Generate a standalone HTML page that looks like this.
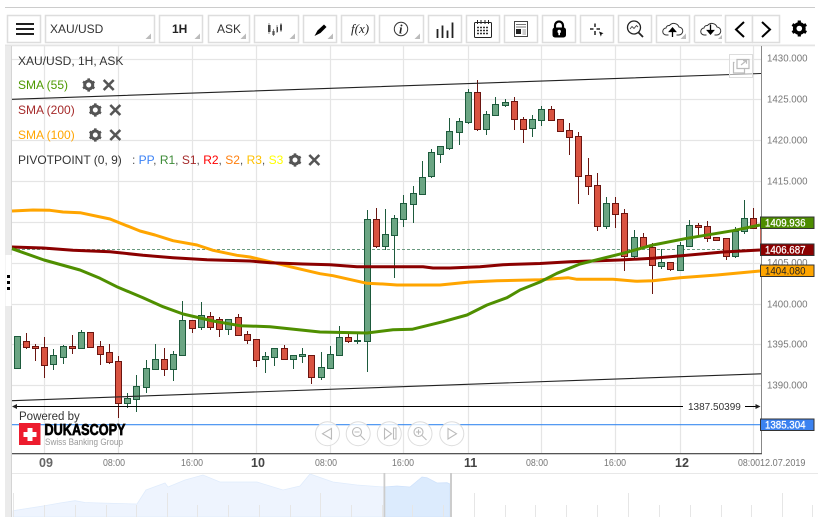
<!DOCTYPE html>
<html><head><meta charset="utf-8"><title>XAU/USD</title>
<style>
html,body{margin:0;padding:0;background:#fff;width:818px;height:517px;overflow:hidden}
svg{display:block;font-family:"Liberation Sans",Arial,sans-serif}
.b{fill:#fff;stroke:#ddd;stroke-width:1.5}
.t{fill:#bbb}
.ax{font-size:10.5px;fill:#777}
.tm{font-size:10px;fill:#777}
.lg{font-size:12px}
</style></head><body>
<svg width="818" height="517" viewBox="0 0 818 517" xmlns="http://www.w3.org/2000/svg">
<defs>
<g id="gear"><g stroke="#555" stroke-width="2.6"><path d="M0-6.6V6.6M-5.7-3.3L5.7 3.3M-5.7 3.3L5.7-3.3"/></g><circle r="4" fill="#fff" stroke="#555" stroke-width="3"/></g>
<path id="xx" d="M-5-5L5 5M-5 5L5-5" stroke="#555" stroke-width="2.6" fill="none"/>
<path id="cloud" d="M-4 6H-6A3.500 3.500 0 0 1-6.500-1A3 3 0 0 1-3-3.500A5.500 5.500 0 0 1 6.500-2A4 4 0 0 1 6 6H4" fill="none" stroke="#333" stroke-width="1"/>
</defs>

<!-- top & left frame -->
<rect x="5" y="7" width="810" height="1" fill="#ccc"/>
<rect x="5" y="44.500" width="810" height="1.800" fill="#e4e4e4"/>
<rect x="5" y="46" width="6" height="471" fill="#ebebeb"/>
<rect x="11" y="46" width="1" height="471" fill="#d4d4d4"/>
<rect x="5.500" y="255" width="6" height="51" fill="#fff"/>
<rect x="7" y="275" width="3" height="3" fill="#000"/><rect x="7" y="281" width="3" height="3" fill="#000"/><rect x="7" y="287" width="3" height="3" fill="#000"/>

<!-- toolbar buttons -->
<rect class="b" x="7.500" y="15.500" width="33" height="27"/>
<rect class="b" x="45.500" y="15.500" width="109" height="27"/>
<rect class="b" x="159.500" y="15.500" width="43" height="27"/>
<rect class="b" x="208.500" y="15.500" width="41" height="27"/>
<rect class="b" x="254.500" y="15.500" width="44" height="27"/>
<rect class="b" x="303.500" y="15.500" width="33" height="27"/>
<rect class="b" x="341.500" y="15.500" width="33" height="27"/>
<rect class="b" x="379.500" y="15.500" width="44" height="27"/>
<rect class="b" x="428.500" y="15.500" width="33" height="27"/>
<rect class="b" x="466.500" y="15.500" width="33" height="27"/>
<rect class="b" x="504.500" y="15.500" width="33" height="27"/>
<rect class="b" x="542.500" y="15.500" width="33" height="27"/>
<rect class="b" x="580.500" y="15.500" width="33" height="27"/>
<rect class="b" x="618.500" y="15.500" width="33" height="27"/>
<rect class="b" x="656.500" y="15.500" width="33" height="27"/>
<path d="M694.500 15.500H722M694.500 42.500H722M694.500 15.500V42.500" fill="none" stroke="#ddd" stroke-width="1.500"/>
<rect class="b" x="725.500" y="15.500" width="27" height="27"/>
<rect class="b" x="752.500" y="15.500" width="27" height="27"/>
<!-- corner triangles -->
<path class="t" d="M151 33.500v5.500h-5.500zM200 33.500v5.500h-5.500zM246 33.500v5.500h-5.500zM295 33.500v5.500h-5.500zM333 33.500v5.500h-5.500zM420 33.500v5.500h-5.500zM686 33.500v5.500h-5.500zM722 35v4h-4z"/>
<!-- menu -->
<path d="M16 24H34M16 29H34M16 34H34" stroke="#000" stroke-width="1.700"/>
<text x="50" y="33" font-size="12" fill="#333">XAU/USD</text>
<text x="172" y="33" font-size="12" font-weight="bold" fill="#222">1H</text>
<text x="217" y="33" font-size="12" fill="#333">ASK</text>
<!-- candles icon -->
<path d="M268 25h2.500v7H268zM272.500 31h2v4h-2zM276.500 27h1.500v5h-1.500zM280 24.500h2v6h-2z" fill="#333"/>
<path d="M269 23v11M273.500 29v7M277 25v8M281 23v9" stroke="#666" stroke-width=".7"/>
<!-- pencil -->
<path d="M314.500 36L317.500 30.500L324 24.500L326.500 27L320.500 33z" fill="#000"/>
<!-- f(x) -->
<text x="351" y="33" font-size="13" font-family="Liberation Serif,serif" font-style="italic" fill="#222">f(x)</text>
<!-- info -->
<circle cx="401" cy="29" r="6.700" fill="none" stroke="#333" stroke-width="1"/>
<text x="399" y="33.500" font-size="12.500" font-family="Liberation Serif,serif" font-style="italic" font-weight="bold" fill="#222">i</text>
<!-- bars -->
<path d="M437.500 38V29M442.500 38V25.500M447.500 38V30.500M452.500 38V22.500" stroke="#222" stroke-width="1.800"/>
<!-- calendar -->
<rect x="474.500" y="22.500" width="17" height="15" rx="1" fill="none" stroke="#222"/>
<path d="M477.500 20v4M481 20v4M485 20v4M488.500 20v4" stroke="#222"/>
<path d="M477 27.500h12M477 30.500h12M477 33.500h12" stroke="#333" stroke-width="1.500" stroke-dasharray="2 1"/>
<!-- news -->
<rect x="514.500" y="21.500" width="13" height="15" fill="none" stroke="#444"/>
<path d="M516 24.500h10M516 27h10" stroke="#777"/>
<rect x="516" y="29" width="5" height="5" fill="#222"/>
<path d="M522.500 30h3.500M522.500 32h3.500M522.500 34h3.500" stroke="#777" stroke-width=".8"/>
<!-- lock -->
<path d="M555 28v-2.500a4 4 0 0 1 8 0V28" fill="none" stroke="#000" stroke-width="2.200"/>
<rect x="552.500" y="27.500" width="13.500" height="10" rx="2.500" fill="#000"/>
<circle cx="559.200" cy="31.500" r="1.700" fill="#fff"/><rect x="558.400" y="32" width="1.600" height="3.200" fill="#fff"/>
<!-- crosshair -->
<path d="M590 29h3.500M596.500 29h3.500M595 23.500v3.500M595 31v4" stroke="#222" stroke-width="1.500"/>
<path d="M599 31.500l4.500 1.800-1.800.8-.8 2.500z" fill="#111"/>
<!-- search chart -->
<circle cx="634" cy="27.500" r="6.500" fill="none" stroke="#222" stroke-width="1.300"/>
<path d="M630 29l2-2.500 2 2 2.500-3 1.500 1.500" fill="none" stroke="#444" stroke-width=".9"/>
<path d="M638.500 32.500l4.500 4.500" stroke="#222" stroke-width="1.800"/>
<!-- upload / download -->
<use href="#cloud" x="672.500" y="29"/>
<path d="M672.500 37v-8M669.500 31.500l3-3.500 3 3.500z" stroke="#000" stroke-width="1.300" fill="#000"/>
<use href="#cloud" x="710.500" y="29"/>
<path d="M710.500 24.500v8M707.500 30.500l3 3.500 3-3.500z" stroke="#000" stroke-width="1.300" fill="#000"/>
<!-- chevrons -->
<path d="M744 22l-8 7.500 8 7.500" fill="none" stroke="#000" stroke-width="2"/>
<path d="M762 22l8 7.500-8 7.500" fill="none" stroke="#000" stroke-width="2"/>
<!-- gear top -->
<g transform="translate(799.300 28.500)"><g stroke="#000" stroke-width="3.200"><path d="M0-8V8M-6.900-4L6.900 4M-6.900 4L6.900-4"/></g><circle r="4.600" fill="#fff" stroke="#000" stroke-width="3.600"/></g>

<!-- grid -->
<path d="M12 59.500H761M12 99.500H761M12 140.500H761M12 181.500H761M12 222.500H761M12 263.500H761M12 304.500H761M12 344.500H761M12 385.500H761M44.500 46V453M118.500 46V453M192.500 46V453M256.500 46V453M330.500 46V453M403.500 46V453M468.500 46V453M541.500 46V453M615.500 46V453M680.500 46V453M753.500 46V453" stroke="#e5e5e5" stroke-width="1.200" fill="none"/>

<!-- dashed last price -->
<path d="M12 249.500H761" stroke="#6a9a80" stroke-dasharray="3 2" fill="none"/>

<!-- candles green -->
<path fill="none" stroke="#1d5a3c" d="M53.500 349V370M63.500 345V364M81.500 330V348M127.500 393V408M136.500 375V412M146.500 360V393M155.500 344V369M173.500 351V381M182.500 301V355M201.500 302V330M228.500 319V335M265.500 352V373M274.500 348V366M293.500 355V369M302.500 348V363M321.500 352V380M330.500 346V369M339.500 326V356M357.500 334V344M367.500 210V372M385.500 209V250M394.500 215V278M403.500 195V227M413.500 186V223M422.500 161V194M431.500 149V178M440.500 146V163M449.500 118V150M459.500 118V145M468.500 89V124M486.500 111V135M495.500 97V116M505.500 99V107M532.500 115V137M541.500 106V126M606.500 197V229M634.500 230V260M661.500 249V269M680.500 242V271M689.500 220V246M735.500 227V258M744.500 200V234"/>
<path fill="#6ba583" stroke="#1d5a3c" d="M14.500 336.500h6v32h-6zM50.500 355.500h6v9h-6zM60.500 346.500h6v11h-6zM78.500 332.500h6v16h-6zM124.500 398.500h6v5h-6zM133.500 386.500h6v13h-6zM143.500 368.500h6v19h-6zM152.500 359.500h6v10h-6zM170.500 354.500h6v15h-6zM179.500 320.500h6v35h-6zM198.500 315.500h6v12h-6zM225.500 319.500h6v10h-6zM262.500 356.500h6v3h-6zM271.500 348.500h6v9h-6zM290.500 355.500h6v4h-6zM299.500 354.500h6v2h-6zM318.500 367.500h6v10h-6zM327.500 354.500h6v14h-6zM336.500 337.500h6v18h-6zM354.500 340.500h6v1h-6zM364.500 219.500h6v122h-6zM382.500 234.500h6v12h-6zM391.500 218.500h6v17h-6zM400.500 203.500h6v16h-6zM410.500 193.500h6v11h-6zM419.500 177.500h6v17h-6zM428.500 152.500h6v24h-6zM437.500 146.500h6v8h-6zM446.500 131.500h6v17h-6zM456.500 121.500h6v11h-6zM465.500 92.500h6v30h-6zM483.500 114.500h6v15h-6zM492.500 104.500h6v11h-6zM502.500 102.500h6v3h-6zM529.500 119.500h6v9h-6zM538.500 109.500h6v11h-6zM603.500 203.500h6v23h-6zM631.500 237.500h6v19h-6zM658.500 262.500h6v4h-6zM677.500 245.500h6v25h-6zM686.500 225.500h6v21h-6zM732.500 231.500h6v25h-6zM741.500 218.500h6v13h-6z"/>
<!-- candles red -->
<path fill="none" stroke="#6b1510" d="M26.500 333V349M35.500 344V361M44.500 337V378M72.500 335V354M90.500 332V348M100.500 341V365M109.500 344V364M118.500 356V418M164.500 348V376M192.500 320V333M210.500 312V330M219.500 317V337M238.500 314V335M247.500 331V344M256.500 339V367M284.500 345V360M311.500 355V384M348.500 334V343M376.500 208V248M477.500 80V131M514.500 97V130M523.500 117V143M551.500 106V120M560.500 119V132M569.500 123V155M578.500 132V204M588.500 158V195M597.500 173V231M615.500 197V228M624.500 209V271M643.500 233V248M652.500 243V294M670.500 262V271M698.500 223V235M707.500 221V242M726.500 238V260M753.500 208V229"/>
<path fill="#d95341" stroke="#6b1510" d="M23.500 341.500h6v6h-6zM32.500 346.500h6v2h-6zM41.500 347.500h6v18h-6zM69.500 346.500h6v2h-6zM87.500 332.500h6v15h-6zM97.500 346.500h6v8h-6zM106.500 352.500h6v10h-6zM115.500 361.500h6v42h-6zM161.500 359.500h6v10h-6zM189.500 320.500h6v8h-6zM207.500 316.500h6v11h-6zM216.500 319.500h6v10h-6zM235.500 317.500h6v18h-6zM244.500 334.500h6v6h-6zM253.500 339.500h6v21h-6zM281.500 348.500h6v11h-6zM308.500 355.500h6v22h-6zM345.500 337.500h6v4h-6zM373.500 219.500h6v27h-6zM474.500 92.500h6v37h-6zM511.500 101.500h6v18h-6zM520.500 119.500h6v10h-6zM548.500 109.500h6v11h-6zM557.500 119.500h6v12h-6zM566.500 130.500h6v7h-6zM575.500 136.500h6v40h-6zM585.500 175.500h6v11h-6zM594.500 185.500h6v41h-6zM612.500 203.500h6v11h-6zM621.500 213.500h6v43h-6zM640.500 237.500h6v10h-6zM649.500 247.500h6v18h-6zM667.500 262.500h6v7h-6zM695.500 225.500h6v2h-6zM704.500 226.500h6v12h-6zM713.500 237.500h6v3h-6zM723.500 238.500h6v18h-6zM750.500 218.500h6v10h-6z"/>
<path d="M760.500 228V250" stroke="#c4665a" stroke-width="1"/>

<!-- moving averages -->
<g fill="none" stroke-width="3" stroke-linejoin="round" stroke-linecap="butt">
<polyline stroke="#ffa500" points="12,211 33,210 50,210.300 63,212 80,212.700 110,219 140,231 155,235 173,240.700 197,245 213,250.300 237,255.300 250,257 270,261.700 290,266.700 320,273.700 333,275.700 367,283.300 383,284 397,285 440,285 470,282 497,280.700 540,279.800 568,277.700 577,279.300 613,279.300 637,281.300 653,280.700 680,277.700 717,275 760,271"/>
<polyline stroke="#8b0000" points="12,247 43,248 73,250.300 110,251.700 143,255.300 173,257.700 207,259.700 250,261 270,262.700 303,264 330,264.700 357,266.700 423,266.700 433,268 450,268 480,266.700 503,264.700 540,263.500 570,261.700 620,260 653,258.300 723,252 760,250"/>
<polyline stroke="#4f8f00" points="12,248.700 44,260 80,270 100,278.300 118,287.300 143,297.700 163,306.700 183,314 213,321 240,325.700 270,326.700 320,332 367,333 393,329.700 412,329.300 443,321.700 467,315 487,305 507,297.700 520,290 540,282 557,273.300 580,264 623,253.300 653,245 687,238.300 733,230.700 760,225"/>
</g>

<!-- trend lines -->
<path d="M12 99.300L761 73.500M12 400.700L761 373.800" stroke="#222" stroke-width="1.100" fill="none"/>
<!-- range line -->
<path d="M15 406.500H683M745 406.500H757" stroke="#000" fill="none"/>
<path d="M12 406.500l5-2.500v5zM760.500 406.500l-5-2.500v5z" fill="#222"/>
<text x="688" y="410" font-size="10" fill="#333">1387.50399</text>
<!-- blue -->
<path d="M12 424.700H761" stroke="#3b8bf0" stroke-width="1.200" fill="none"/>

<!-- axes -->
<rect x="761" y="46" width="1" height="408" fill="#888"/>
<rect x="12" y="453" width="750" height="1.300" fill="#555"/>

<!-- expand -->
<rect x="729.500" y="54.500" width="23" height="23" fill="#fff" fill-opacity=".6" stroke="#ddd" stroke-width="1"/>
<path d="M734.500 62.500h-1v10.500h11v-5M737 59.500h12v9h-12z M741 65l5-4M743 60.700h3.500v3" fill="none" stroke="#bbb" stroke-width="1.200"/>

<!-- legend -->
<text class="lg" x="18" y="65" fill="#333">XAU/USD, 1H, ASK</text>
<text class="lg" x="18" y="89" fill="#4d9900">SMA (55)</text>
<use href="#gear" x="88.700" y="85"/><use href="#xx" x="108.700" y="85"/>
<text class="lg" x="18" y="114" fill="#a52a2a">SMA (200)</text>
<use href="#gear" x="95.300" y="110"/><use href="#xx" x="115.300" y="110"/>
<text class="lg" x="18" y="139" fill="#ffa500">SMA (100)</text>
<use href="#gear" x="95.300" y="135"/><use href="#xx" x="115.300" y="135"/>
<text class="lg" x="18" y="164" fill="#333">PIVOTPOINT (0, 9)</text>
<text class="lg" x="132" y="164" fill="#555">: <tspan fill="#3b82f6">PP</tspan>, <tspan fill="#3d8b37">R1</tspan>, <tspan fill="#a52a2a">S1</tspan>, <tspan fill="#ff0000">R2</tspan>, <tspan fill="#ff7f0e">S2</tspan>, <tspan fill="#ffc000">R3</tspan>, <tspan fill="#ffff00">S3</tspan></text>
<use href="#gear" x="295" y="160"/><use href="#xx" x="314.300" y="160"/>

<!-- price axis -->
<g class="ax">
<text x="767" y="61.500" textLength="40.500" lengthAdjust="spacingAndGlyphs">1430.000</text>
<text x="767" y="102.500" textLength="40.500" lengthAdjust="spacingAndGlyphs">1425.000</text>
<text x="767" y="143.500" textLength="40.500" lengthAdjust="spacingAndGlyphs">1420.000</text>
<text x="767" y="184.500" textLength="40.500" lengthAdjust="spacingAndGlyphs">1415.000</text>
<text x="767" y="266" textLength="40.500" lengthAdjust="spacingAndGlyphs">1405.000</text>
<text x="767" y="307.500" textLength="40.500" lengthAdjust="spacingAndGlyphs">1400.000</text>
<text x="767" y="347.500" textLength="40.500" lengthAdjust="spacingAndGlyphs">1395.000</text>
<text x="767" y="388.500" textLength="40.500" lengthAdjust="spacingAndGlyphs">1390.000</text>
</g>
<rect x="760.500" y="217" width="53.500" height="11.500" fill="#4d8c00" stroke="#333"/>
<text x="765" y="226.500" font-size="11" fill="#fff" stroke="#fff" stroke-width=".25" textLength="40.500" lengthAdjust="spacingAndGlyphs">1409.936</text>
<rect x="760.500" y="244" width="53.500" height="11.500" fill="#8b0000" stroke="#333"/>
<text x="765" y="253.500" font-size="11" fill="#fff" stroke="#fff" stroke-width=".25" textLength="40.500" lengthAdjust="spacingAndGlyphs">1406.687</text>
<rect x="760.500" y="265" width="53.500" height="11.500" fill="#ffa500" stroke="#333"/>
<text x="765" y="274.500" font-size="11" fill="#222" textLength="40.500" lengthAdjust="spacingAndGlyphs">1404.080</text>
<rect x="760.500" y="419" width="53.500" height="11.500" fill="#3b82f0" stroke="#333"/>
<text x="765" y="428.500" font-size="11" fill="#fff" stroke="#fff" stroke-width=".25" textLength="40.500" lengthAdjust="spacingAndGlyphs">1385.304</text>

<!-- powered by -->
<text x="19" y="420" font-size="11.500" fill="#333">Powered by</text>
<rect x="19" y="423" width="21.500" height="22" fill="#ed1c2e"/>
<path d="M27.500 428h5v4h4v5h-4v4h-5v-4h-4v-5h4z" fill="#fff"/>
<text x="44.500" y="435" font-size="15.500" font-weight="bold" fill="#000" stroke="#000" stroke-width=".7" textLength="81" lengthAdjust="spacingAndGlyphs">DUKASCOPY</text>
<text x="45" y="445" font-size="9.500" fill="#999" textLength="78" lengthAdjust="spacingAndGlyphs">Swiss Banking Group</text>

<!-- nav buttons -->
<g fill="#fff" fill-opacity=".8" stroke="#ddd" stroke-width="1">
<circle cx="327.500" cy="433.700" r="12"/><circle cx="358.200" cy="433.700" r="12"/><circle cx="389.300" cy="433.700" r="12"/><circle cx="420" cy="433.700" r="12"/><circle cx="451.800" cy="433.700" r="12"/>
</g>
<g fill="none" stroke="#bbb" stroke-width="1.100">
<path d="M331.500 428.500v10.500l-9-5.300z"/>
<circle cx="357" cy="432" r="4.500"/><path d="M360.500 435.500l4.500 4.500M354.500 432h5"/>
<path d="M384.500 428.500v10.500l7-5.300zM393.500 428v11h2.500v-11z"/>
<circle cx="418.500" cy="432" r="4.500"/><path d="M422 435.500l4.500 4.500M416 432h5M418.500 429.500v5"/>
<path d="M448 428.500v10.500l8.500-5.300z"/>
</g>

<!-- time axis -->
<g font-weight="bold">
<text x="39" y="467" font-size="12.500" fill="#666">09</text>
<text x="251" y="467" font-size="12.500" fill="#444">10</text>
<text x="464" y="467" font-size="12.500" fill="#444">11</text>
<text x="675" y="467" font-size="12.500" fill="#444">12</text>
</g>
<g class="tm">
<text x="103" y="466" textLength="22" lengthAdjust="spacingAndGlyphs">08:00</text>
<text x="181" y="466" textLength="22" lengthAdjust="spacingAndGlyphs">16:00</text>
<text x="315" y="466" textLength="22" lengthAdjust="spacingAndGlyphs">08:00</text>
<text x="392" y="466" textLength="22" lengthAdjust="spacingAndGlyphs">16:00</text>
<text x="526" y="466" textLength="22" lengthAdjust="spacingAndGlyphs">08:00</text>
<text x="604" y="466" textLength="22" lengthAdjust="spacingAndGlyphs">16:00</text>
<text x="738" y="466" textLength="22" lengthAdjust="spacingAndGlyphs">08:00</text>
<text x="760" y="466" textLength="45.500" lengthAdjust="spacingAndGlyphs">12.07.2019</text>
</g>

<!-- navigator -->
<rect x="12" y="473" width="806" height="1" fill="#e8e8e8"/>
<path d="M13 517V510.700L43 506L60 503L75 500.700L85 502.500L100 503L137 504L146 490L165 483L168 487L185 480L203 475L220 482L257 482L283 490L300 486L310 474L333 482L357 485L384 487V517z" fill="#eef4fe" stroke="#e0ecfc" stroke-width=".8"/>
<path d="M384 517V487L397 486L410 487L422 477L427 477.700L437 483L447 482.700L450 484V517z" fill="#dcebfd" stroke="#cfe2fb" stroke-width=".8"/>
<path d="M13.500 517V493M167.500 517V493M320.500 517V493M474.500 517V493M628.500 517V493M782.500 517V493M44.500 517V505M75.500 517V505M106.500 517V505M136.500 517V505M197.500 517V505M228.500 517V505M259.500 517V505M290.500 517V505M351.500 517V505M382.500 517V505M412.500 517V505M443.500 517V505M505.500 517V505M535.500 517V505M566.500 517V505M597.500 517V505M659.500 517V505M690.500 517V505M721.500 517V505M751.500 517V505M812.500 517V505" stroke="#e6e6e6" fill="none"/>
<rect x="383.500" y="473" width="1.800" height="44" fill="#ccc"/>
<rect x="450" y="473" width="2" height="44" fill="#ccc"/>
</svg>
</body></html>
